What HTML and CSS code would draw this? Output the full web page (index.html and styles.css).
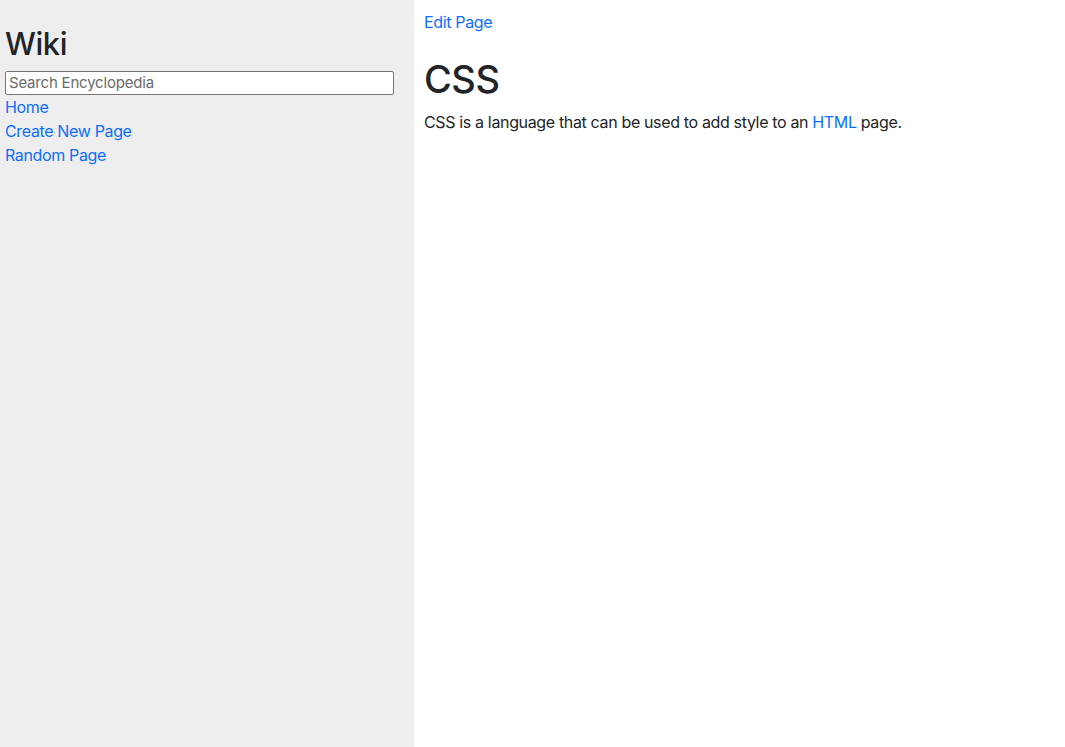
FILE: index.html
```html
<!DOCTYPE html>
<html lang="en">
<head>
<meta charset="utf-8">
<title>CSS</title>
<link rel="stylesheet" href="styles.css">
</head>
<body>
<div class="layout">
  <aside class="sidebar">
    <h2 class="brand">Wiki</h2>
    <form class="search-form">
      <input class="search" type="text" name="q" placeholder="Search Encyclopedia">
    </form>
    <div class="nav-item"><a href="#">Home</a></div>
    <div class="nav-item"><a href="#">Create New Page</a></div>
    <div class="nav-item"><a href="#">Random Page</a></div>
  </aside>
  <main class="main">
    <a href="#">Edit Page</a>
    <h1 class="title">CSS</h1>
    <p class="text">CSS is a language that can be used to add style to an <a href="#">HTML</a> page.</p>
  </main>
</div>
</body>
</html>
```
FILE: styles.css
```css
html, body {
  margin: 0;
  padding: 0;
}
body {
  font-family: Inter, "Liberation Sans", sans-serif;
  font-size: 16px;
  line-height: 1.5;
  letter-spacing: -0.35px;
  color: #212529;
  background: #fff;
}
a {
  color: #0d6efd;
  text-decoration: none;
}
.layout {
  display: flex;
  min-height: 100vh;
}
.sidebar {
  width: 414px;
  flex: 0 0 414px;
  box-sizing: border-box;
  background: #eeeeee;
  padding: 5px;
  height: 100vh;
}
.brand {
  font-size: 30.8px;
  font-weight: 500;
  line-height: 1.2;
  letter-spacing: -0.4px;
  margin: 21px 0 8px;
}
.search-form {
  margin: 0;
}
.search {
  box-sizing: border-box;
  width: 389px;
  height: 24px;
  font-family: inherit;
  font-size: 15px;
  letter-spacing: -0.2px;
  padding: 1px 3px;
  border: 1px solid #767676;
  border-radius: 2px;
  background: #fff;
  display: block;
}
.search::placeholder {
  color: #6b6b6b;
}
.main {
  flex: 1;
  padding: 10px;
}
.title {
  font-size: 38px;
  font-weight: 500;
  line-height: 1.2;
  letter-spacing: -0.5px;
  margin: 0 0 7px;
  padding-top: 23px;
}
.text {
  margin: 0 0 16px;
}
```
